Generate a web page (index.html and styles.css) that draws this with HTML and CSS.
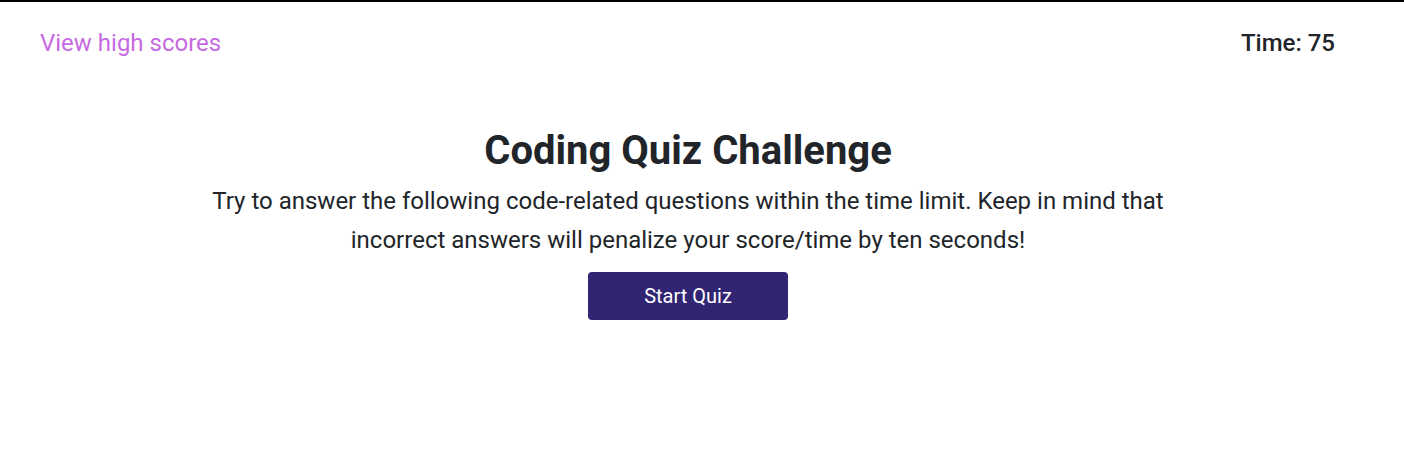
FILE: index.html
```html
<!DOCTYPE html>
<html lang="en">
<head>
<meta charset="utf-8">
<title>Coding Quiz</title>
<link rel="stylesheet" href="styles.css">
</head>
<body>
<header class="topbar">
  <a class="scores-link" href="#">View high scores</a>
  <div class="timer">Time: <span>75</span></div>
</header>
<main class="intro">
  <h1 class="title">Coding Quiz Challenge</h1>
  <p class="desc">Try to answer the following code-related questions within the time limit. Keep in mind that incorrect answers will penalize your score/time by ten seconds!</p>
  <button class="start-btn">Start Quiz</button>
</main>
</body>
</html>
```
FILE: styles.css
```css
* { box-sizing: border-box; }
html, body { margin: 0; padding: 0; }
body {
  font-family: Roboto, "Liberation Sans", sans-serif;
  color: #212529;
  background: #fff;
  border-top: 2px solid #000;
  height: 459px;
}
.topbar {
  display: flex;
  justify-content: space-between;
  align-items: center;
  padding: 26px 69px 0 40px;
}
.scores-link {
  color: #c56ae0;
  text-decoration: none;
  font-size: 24px;
  line-height: 30px;
}
.timer {
  font-size: 24px;
  font-weight: 500;
  line-height: 30px;
}
.intro {
  display: flex;
  flex-direction: column;
  align-items: center;
  text-align: center;
  padding: 69px 28px 0 0;
}
.title {
  margin: 0;
  font-size: 40px;
  font-weight: 700;
  line-height: 48px;
}
.desc {
  margin: 7px 0 0;
  width: 1000px;
  font-size: 24px;
  line-height: 39px;
}
.start-btn {
  margin-top: 12px;
  width: 200px;
  height: 48px;
  border: none;
  border-radius: 4px;
  background: #312473;
  color: #fff;
  font-family: Roboto, "Liberation Sans", sans-serif;
  font-size: 20px;
}
```
